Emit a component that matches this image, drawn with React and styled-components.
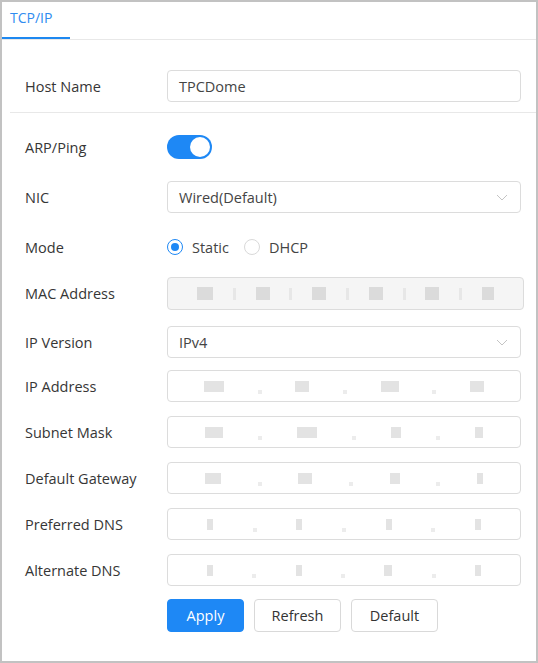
import React, { useState } from 'react';
import styled, { createGlobalStyle } from 'styled-components';

const GlobalStyle = createGlobalStyle`
  html, body {
    margin: 0;
    padding: 0;
    background: #fff;
  }
  body {
    font-family: "Open Sans", "Liberation Sans", sans-serif;
    color: #333;
  }
`

const Frame = styled.div`
  width: 538px;
  height: 663px;
  box-sizing: border-box;
  border: 2px solid #c2c2c2;
  background: #fff;
  display: flex;
  flex-direction: column;
`

const TabBar = styled.div`
  display: flex;
  height: 37px;
  border-bottom: 1px solid #e8e8e8;
`

const Tab = styled.div`
  width: 68px;
  box-sizing: border-box;
  padding-left: 8px;
  padding-top: 6px;
  font-size: 14px;
  color: #2f8cf0;
  border-bottom: 2px solid #1e88f0;
`

const Section = styled.div`
  display: flex;
  flex-direction: column;
  padding: ${p => p.$pad};
`

const Divider = styled.div`
  height: 1px;
  background: #e8e8e8;
  margin-left: 8px;
`

const Row = styled.div`
  display: flex;
  align-items: center;
  min-height: 32px;
  margin-top: ${p => p.$mt || 0}px;
`

const Label = styled.div`
  width: 142px;
  padding-left: 23px;
  font-size: 14.5px;
  color: #363636;
  flex-shrink: 0;
`

const Field = styled.div`
  width: ${p => p.$w || 354}px;
  height: ${p => p.$h || 32}px;
  box-sizing: border-box;
  border: 1px solid #dcdcdc;
  border-radius: 4px;
  background: ${p => (p.$disabled ? '#f5f5f5' : '#fff')};
  display: flex;
  align-items: center;
  padding: 0 11px;
  font-size: 14.5px;
  color: #444;
`

const SelectText = styled.span`
  flex: 1;
`

const Chevron = styled.svg`
  width: 12px;
  height: 7px;
  margin-right: 1px;
`

const Switch = styled.div`
  width: 45px;
  height: 24px;
  border-radius: 12px;
  background: #1e88f5;
  display: flex;
  align-items: center;
  justify-content: flex-end;
  padding: 0 2px;
  box-sizing: border-box;
`

const Knob = styled.div`
  width: 20px;
  height: 20px;
  border-radius: 50%;
  background: #fff;
`

const RadioGroup = styled.div`
  display: flex;
  align-items: center;
  gap: 15px;
  font-size: 14.5px;
  color: #444;
`

const RadioItem = styled.label`
  display: flex;
  align-items: center;
  gap: 9px;
`

const RadioCircle = styled.span`
  width: 16px;
  height: 16px;
  box-sizing: border-box;
  border-radius: 50%;
  border: 1px solid ${p => (p.$on ? '#1e88f5' : '#d9d9d9')};
  display: flex;
  align-items: center;
  justify-content: center;
  &::after {
    content: '';
    width: 8px;
    height: 8px;
    border-radius: 50%;
    background: ${p => (p.$on ? '#1e88f5' : 'transparent')};
  }
`

const Masked = styled.div`
  flex: 1;
  display: flex;
  align-items: center;
  justify-content: space-around;
  padding: 0 8px;
`

const Blur = styled.span`
  display: inline-block;
  width: ${p => p.$w}px;
  height: ${p => p.$h || 11}px;
  background: ${p => p.$c || '#dadada'};
  opacity: 0.75;
  margin-top: ${p => p.$dy || 0}px;
`

const Buttons = styled.div`
  display: flex;
  gap: 10px;
`

const Button = styled.button`
  height: 33px;
  min-width: ${p => p.$w}px;
  box-sizing: border-box;
  border-radius: 4px;
  font-family: inherit;
  font-size: 14.5px;
  border: 1px solid ${p => (p.$primary ? '#1e88f5' : '#d9d9d9')};
  background: ${p => (p.$primary ? '#1e88f5' : '#fff')};
  color: ${p => (p.$primary ? '#fff' : '#333')};
  padding: 0;
`

function Select({ value }) {
  return (
    <Field>
      <SelectText>{value}</SelectText>
      <Chevron viewBox="0 0 12 7">
        <path d="M1 1 L6 6 L11 1" fill="none" stroke="#c4c4c4" strokeWidth="1" />
      </Chevron>
    </Field>
  )
}

function IpValue({ groups }) {
  const parts = []
  groups.forEach((w, i) => {
    parts.push(<Blur key={'g' + i} $w={w} />)
    if (i < groups.length - 1) parts.push(<Blur key={'d' + i} $w={4} $h={4} $dy={12} $c="#e6e6e6" />)
  })
  return (
    <Field>
      <Masked>{parts}</Masked>
    </Field>
  )
}

function MacValue() {
  const groups = [16, 14, 14, 14, 14, 12]
  const parts = []
  groups.forEach((w, i) => {
    parts.push(<Blur key={'g' + i} $w={w} $h={13} $c="#d2d2d2" />)
    if (i < groups.length - 1) parts.push(<Blur key={'s' + i} $w={3} $h={12} $c="#e2e2e2" />)
  })
  return (
    <Field $w={357} $h={33} $disabled>
      <Masked>{parts}</Masked>
    </Field>
  )
}

export default function App() {
  const [mode] = useState('static')

  const ipRows = [
    { label: 'IP Address', groups: [20, 14, 18, 14], mt: 12 },
    { label: 'Subnet Mask', groups: [18, 20, 10, 8], mt: 14 },
    { label: 'Default Gateway', groups: [16, 14, 10, 6], mt: 14 },
    { label: 'Preferred DNS', groups: [6, 6, 6, 6], mt: 14 },
    { label: 'Alternate DNS', groups: [6, 6, 8, 6], mt: 14 }
  ]

  return (
    <Frame>
      <GlobalStyle />
      <TabBar>
        <Tab>TCP/IP</Tab>
      </TabBar>
      <Section $pad="30px 0 10px">
        <Row>
          <Label>Host Name</Label>
          <Field>TPCDome</Field>
        </Row>
      </Section>
      <Divider />
      <Section $pad="0">
        <Row $mt={18}>
          <Label>ARP/Ping</Label>
          <Switch>
            <Knob />
          </Switch>
        </Row>
        <Row $mt={18}>
          <Label>NIC</Label>
          <Select value="Wired(Default)" />
        </Row>
        <Row $mt={18}>
          <Label>Mode</Label>
          <RadioGroup>
            <RadioItem>
              <RadioCircle $on={mode === 'static'} />
              Static
            </RadioItem>
            <RadioItem>
              <RadioCircle $on={mode === 'dhcp'} />
              DHCP
            </RadioItem>
          </RadioGroup>
        </Row>
        <Row $mt={14}>
          <Label>MAC Address</Label>
          <MacValue />
        </Row>
        <Row $mt={16}>
          <Label>IP Version</Label>
          <Select value="IPv4" />
        </Row>
        {ipRows.map((r, key) => (
          <Row key={key} $mt={r.mt}>
            <Label>{r.label}</Label>
            <IpValue groups={r.groups} />
          </Row>
        ))}
        <Row $mt={13}>
          <Label />
          <Buttons>
            <Button $primary $w={77}>Apply</Button>
            <Button $w={87}>Refresh</Button>
            <Button $w={87}>Default</Button>
          </Buttons>
        </Row>
      </Section>
    </Frame>
  )
}
